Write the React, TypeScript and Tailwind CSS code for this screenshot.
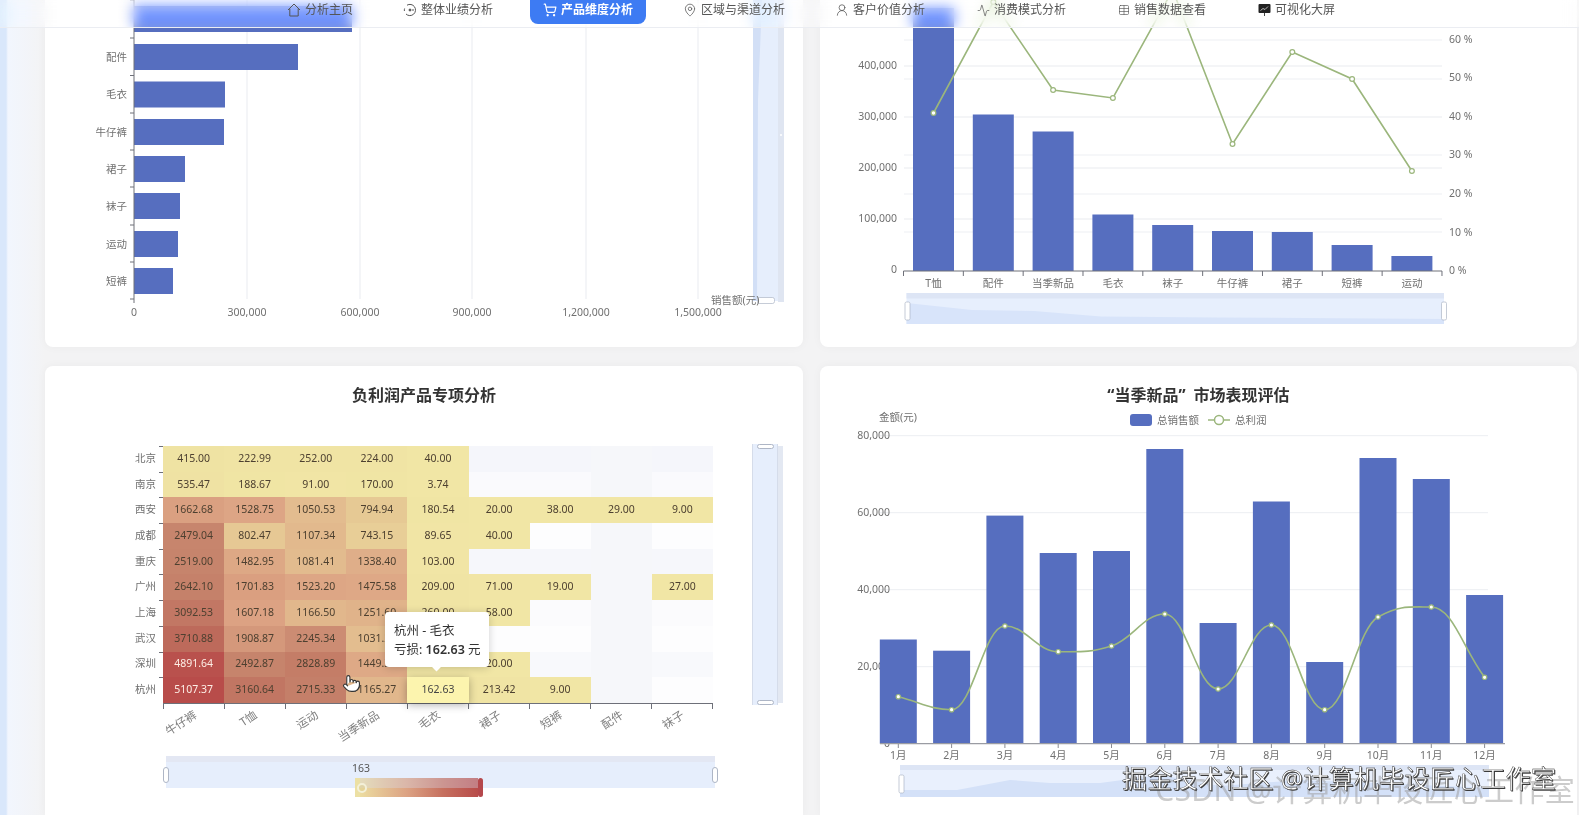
import { Activity, MapPin, Pointer, ShoppingCart, Table, UserRound } from "lucide-react";
import type { ReactNode } from "react";

const BAR = "#566ebf";
const LINE = "#9bb67c";

function HomeIcon() {
  return (
    <svg width="14" height="14" viewBox="0 0 14 14" fill="none" stroke="currentColor" strokeWidth="1">
      <path d="M1 7 7 1l6 6M2.8 5.6V13h8.4V5.6" />
    </svg>
  );
}

function OverviewIcon() {
  return (
    <svg width="14" height="14" viewBox="0 0 14 14" fill="none" stroke="currentColor" strokeWidth="1">
      <path d="M4 2.2A5.6 5.6 0 1 1 3 11M1.6 5.5a5.6 5.6 0 0 0-.2 2.5" />
      <circle cx="7" cy="7" r="1" fill="currentColor" />
      <path d="M9 7h2" />
    </svg>
  );
}

function ScreenIcon() {
  return (
    <svg width="13" height="14" viewBox="0 0 13 14">
      <rect x="0.5" y="1" width="12" height="9" rx="1" fill="#222" />
      <path d="m2.5 7.5 2.5-2 2 1 3-3" stroke="#ddd" strokeWidth="0.8" fill="none" />
      <path d="M6.5 10v3" stroke="#444" strokeWidth="1" />
    </svg>
  );
}

const navItems: { label: string; icon: ReactNode; active?: boolean; nudge?: boolean }[] = [
  { label: "分析主页", icon: <HomeIcon /> },
  { label: "整体业绩分析", icon: <OverviewIcon /> },
  { label: "产品维度分析", icon: <ShoppingCart size={14} />, active: true },
  { label: "区域与渠道分析", icon: <MapPin size={14} strokeWidth={1.3} /> },
  { label: "客户价值分析", icon: <UserRound size={14} strokeWidth={1.3} /> },
  { label: "消费模式分析", icon: <Activity size={13} strokeWidth={1.3} />, nudge: true },
  { label: "销售数据查看", icon: <Table size={12} strokeWidth={1.3} />, nudge: true },
  { label: "可视化大屏", icon: <ScreenIcon />, nudge: true },
];

function TopNav() {
  return (
    <nav className="absolute inset-x-0 top-0 z-20 flex h-[28px] items-start gap-[24px] border-b border-[#ebedf2] bg-white/25 pl-[274px] backdrop-blur-[7px] backdrop-saturate-[2]">
      {navItems.map((item) => (
        <div
          key={item.label}
          className={
            item.active
              ? "flex h-[24px] items-center gap-[4px] rounded-b-lg bg-[#3d7bf3] px-[13px] pb-[4px] text-[12px] font-bold text-white"
              : item.nudge
                ? "ml-[2px] flex h-[24px] items-center gap-[4px] px-[13px] pb-[4px] text-[12px] text-[#555]"
                : "flex h-[24px] items-center gap-[4px] px-[13px] pb-[4px] text-[12px] text-[#555]"
          }
        >
          {item.icon}
          <span>{item.label}</span>
        </div>
      ))}
    </nav>
  );
}

const hBars = [
  { name: "", y: 6, x: 352 },
  { name: "配件", y: 44, x: 298 },
  { name: "毛衣", y: 81.5, x: 225 },
  { name: "牛仔裤", y: 119, x: 224 },
  { name: "裙子", y: 156, x: 185 },
  { name: "袜子", y: 193, x: 180 },
  { name: "运动", y: 231, x: 178 },
  { name: "短裤", y: 268, x: 173 },
];

function TopSellersChart() {
  const grid = [247, 360, 472, 586, 698];
  const ticks = [134, ...grid];
  const labels = ["0", "300,000", "600,000", "900,000", "1,200,000", "1,500,000"];
  return (
    <svg width="758" height="347" viewBox="45 0 758 347" className="block text-[10.5px]">
      {grid.map((x) => (
        <line key={x} x1={x} x2={x} y1="0" y2="299" stroke="#e9ebf0" />
      ))}
      <rect x="753" y="0" width="31" height="301" fill="#e6eefc" />
      <path d="M753 0H762L758 100 757 301H753Z" fill="#d2dff6" />
      <rect x="778" y="0" width="6" height="302" fill="#dfe5f1" />
      <circle cx="781" cy="135" r="1" fill="#fff" />
      <rect x="757.5" y="297.5" width="17" height="6" rx="2" fill="#fff" stroke="#aeb6c6" strokeWidth="0.7" />
      {hBars.map((b) => (
        <g key={b.y}>
          <rect x="134" y={b.y} width={b.x - 134} height="26" fill={BAR} />
          <text x="127" y={b.y + 13} dy="0.35em" textAnchor="end" fill="#707070">
            {b.name}
          </text>
          <line x1="130" x2="134" y1={b.y - 6} y2={b.y - 6} stroke="#6e7079" />
        </g>
      ))}
      <line x1="130" x2="134" y1="299" y2="299" stroke="#6e7079" />
      <line x1="134" x2="134" y1="0" y2="303" stroke="#6e7079" />
      {ticks.map((x, i) => (
        <text key={x} x={x} y="312" dy="0.35em" textAnchor="middle" fill="#707070">
          {labels[i]}
        </text>
      ))}
      <text x="711" y="300" dy="0.35em" fill="#707070">
        销售额(元)
      </text>
    </svg>
  );
}

const comboBars = [
  { name: "T恤", top: 8, rate: 113 },
  { name: "配件", top: 114.5, rate: 2 },
  { name: "当季新品", top: 131.5, rate: 90 },
  { name: "毛衣", top: 214.5, rate: 98 },
  { name: "袜子", top: 225, rate: -10 },
  { name: "牛仔裤", top: 231, rate: 144 },
  { name: "裙子", top: 232, rate: 52 },
  { name: "短裤", top: 245, rate: 79 },
  { name: "运动", top: 256, rate: 171 },
];

function ProductComboChart() {
  const cx = (i: number) => 933.5 + i * 59.8;
  const points = comboBars.map((b, i) => `${cx(i)},${b.rate}`).join(" ");
  return (
    <svg width="757" height="347" viewBox="820 0 757 347" className="block text-[10.5px]">
      {[66, 117, 168, 219].map((y) => (
        <line key={y} x1="904" x2="1442" y1={y} y2={y} stroke="#eaecf0" strokeWidth="1.2" />
      ))}
      {[40, 79, 155, 194, 232].map((y) => (
        <line key={y} x1="904" x2="1442" y1={y} y2={y} stroke="#eef0f3" strokeWidth="1.2" />
      ))}
      {["400,000", "300,000", "200,000", "100,000", "0"].map((t, i) => (
        <text key={t} x="897" y={65 + i * 51.2} dy="0.35em" textAnchor="end" fill="#707070">
          {t}
        </text>
      ))}
      {["60 %", "50 %", "40 %", "30 %", "20 %", "10 %", "0 %"].map((t, i) => (
        <text key={t} x="1449" y={39 + i * 38.6} dy="0.35em" fill="#707070">
          {t}
        </text>
      ))}
      {comboBars.map((b, i) => (
        <g key={b.name}>
          <rect x={cx(i) - 20.5} y={b.top} width="41" height={271 - b.top} fill={BAR} />
          <text x={cx(i)} y="283" dy="0.35em" textAnchor="middle" fill="#707070">
            {b.name}
          </text>
        </g>
      ))}
      <line x1="903.5" x2="1442" y1="271" y2="271" stroke="#6e7079" />
      {Array.from({ length: 10 }, (_, i) => (
        <line key={i} x1={903.5 + i * 59.83} x2={903.5 + i * 59.83} y1="271" y2="276" stroke="#6e7079" />
      ))}
      <polyline points={points} fill="none" stroke={LINE} strokeWidth="1.6" />
      {comboBars.map((b, i) => (
        <circle key={b.name} cx={cx(i)} cy={b.rate} r="2.4" fill="#fff" stroke={LINE} strokeWidth="1.2" />
      ))}
      <rect x="906.5" y="293" width="537.5" height="31" fill="#e7effd" />
      <rect x="906.5" y="293" width="537.5" height="5.5" fill="#dde5f5" />
      <path d="M906.5 303 972 310 1034 311 1101 316.5 1216 317.5 1444 319V324H906.5Z" fill="#d8e4fa" />
      <rect x="905" y="302" width="5" height="18" rx="1.5" fill="#fff" stroke="#aeb6c6" strokeWidth="0.7" />
      <rect x="1441.5" y="302" width="5" height="18" rx="1.5" fill="#fff" stroke="#aeb6c6" strokeWidth="0.7" />
    </svg>
  );
}

const products = ["牛仔裤", "T恤", "运动", "当季新品", "毛衣", "裙子", "短裤", "配件", "袜子"];

const heatRows: { city: string; tint: string; values: (number | null)[] }[] = [
  { city: "北京", tint: "#f5f6fb", values: [415, 222.99, 252, 224, 40, null, null, null, null] },
  { city: "南京", tint: "#fafafd", values: [535.47, 188.67, 91, 170, 3.74, null, null, null, null] },
  { city: "西安", tint: "#fdfdfe", values: [1662.68, 1528.75, 1050.53, 794.94, 180.54, 20, 38, 29, 9] },
  { city: "成都", tint: "#fdfdfe", values: [2479.04, 802.47, 1107.34, 743.15, 89.65, 40, null, null, null] },
  { city: "重庆", tint: "#f6f7fb", values: [2519, 1482.95, 1081.41, 1338.4, 103, null, null, null, null] },
  { city: "广州", tint: "#fafafd", values: [2642.1, 1701.83, 1523.2, 1475.58, 209, 71, 19, null, 27] },
  { city: "上海", tint: "#fbfbfd", values: [3092.53, 1607.18, 1166.5, 1251.6, 260, 58, null, null, null] },
  { city: "武汉", tint: "#fdfdfe", values: [3710.88, 1908.87, 2245.34, 1031.2, 150, null, null, null, null] },
  { city: "深圳", tint: "#f8f9fc", values: [4891.64, 2492.87, 2828.89, 1449.3, 180, 20, null, null, null] },
  { city: "杭州", tint: "#fdfdfe", values: [5107.37, 3160.64, 2715.33, 1165.27, 162.63, 213.42, 9, null, null] },
];

const stops: [number, number[]][] = [
  [0, [241, 230, 165]],
  [550, [239, 226, 163]],
  [800, [230, 200, 148]],
  [1600, [220, 162, 131]],
  [2500, [198, 132, 108]],
  [3700, [189, 106, 91]],
  [5107, [184, 76, 74]],
];

function heatColor(v: number) {
  for (let i = 1; i < stops.length; i++) {
    if (v <= stops[i][0]) {
      const [a, ca] = stops[i - 1];
      const [b, cb] = stops[i];
      const t = (v - a) / (b - a);
      const c = ca.map((n, k) => Math.round(n + (cb[k] - n) * t));
      return `rgb(${c[0]},${c[1]},${c[2]})`;
    }
  }
  return "rgb(184,76,74)";
}

function HeatmapCard() {
  return (
    <section className="overflow-hidden rounded-t-lg bg-white pt-[19px] shadow-[0_0_10px_rgba(0,0,0,0.04)]">
      <h2 className="text-center text-[16px] leading-[20px] font-bold text-[#333]">负利润产品专项分析</h2>
      <div className="relative mt-[41px] flex h-[310px] items-start">
        <div className="w-[118px]">
          {heatRows.map((row) => (
            <div key={row.city} className="flex h-[25.7px] justify-end text-[10.5px] text-[#707070]">
              <span className="mr-[3px] self-center">{row.city}</span>
              <span className="w-[4px] border-t border-[#6e7079]" />
            </div>
          ))}
        </div>
        <div className="w-[550px]">
          <div className="grid grid-cols-9 grid-rows-[repeat(10,25.7px)] text-[10.5px]">
            {heatRows.map((row) =>
              row.values.map((v, i) => {
                const key = `${row.city}-${i}`;
                if (v === null) {
                  return <div key={key} style={{ backgroundColor: i === 7 ? "#f6f7fa" : row.tint }} />;
                }
                if (row.city === "杭州" && i === 4) {
                  return (
                    <div
                      key={key}
                      className="relative z-10 flex items-center justify-center bg-[#fcf4ae] text-[#444] shadow-[0_2px_8px_rgba(0,0,0,0.3)]"
                    >
                      {v.toFixed(2)}
                    </div>
                  );
                }
                return (
                  <div
                    key={key}
                    className={
                      v > 4000
                        ? "flex items-center justify-center text-[#fdeee6]"
                        : "flex items-center justify-center text-[#4d4030]"
                    }
                    style={{ backgroundColor: heatColor(v) }}
                  >
                    {v.toFixed(2)}
                  </div>
                );
              }),
            )}
          </div>
          <div className="grid grid-cols-9 border-t border-r border-[#6e7079] text-[11.5px] text-[#808080]">
            {products.map((p) => (
              <div key={p} className="h-[5px] border-l border-[#6e7079]">
                <div className="flex w-1/2 justify-end pt-[2px] pr-[4px] whitespace-nowrap">
                  <span className="origin-top-right rotate-[-33deg]">{p}</span>
                </div>
              </div>
            ))}
          </div>
        </div>
        <div className="ml-[39px] flex h-[257px] w-[31px]">
          <div className="-my-[2px] flex w-[26px] flex-col items-center justify-between border-x border-[#d5dcea] bg-[#e6eefc]">
            <span className="h-[5px] w-[17px] rounded-sm border border-[#aeb6c6] bg-white" />
            <span className="h-[5px] w-[17px] rounded-sm border border-[#aeb6c6] bg-white" />
          </div>
          <div className="w-[5px] bg-[#e3e8f2]" />
        </div>
        <div className="absolute top-[166px] left-[340px] z-10 h-[55px] w-[104px] rounded bg-white px-[9px] py-[9px] text-[12.5px] leading-[19px] whitespace-nowrap text-[#333] shadow-[0_1px_8px_rgba(0,0,0,0.18)]">
          <p>杭州 - 毛衣</p>
          <p>
            亏损: <b className="font-semibold">162.63</b> 元
          </p>
          <span className="absolute bottom-[-3px] left-[48px] size-[7px] rotate-45 bg-white" />
        </div>
        <Pointer
          size={19}
          strokeWidth={1.4}
          fill="#fff"
          className="absolute top-[228px] left-[297px] z-10 text-[#333]"
        />
      </div>
      <div className="relative ml-[121px] w-[549px] text-[10.5px] text-[#555]">
        <div className="h-[6px] bg-[#e3e7f3]" />
        <div className="flex h-[26px] items-center justify-between bg-[#e6eefc]">
          <span className="-ml-[3px] h-[16px] w-[6px] rounded-sm border border-[#aeb6c6] bg-white" />
          <span className="-mr-[3px] h-[16px] w-[6px] rounded-sm border border-[#aeb6c6] bg-white" />
        </div>
        <span className="absolute top-[5px] left-[186px]">163</span>
        <div className="absolute top-[22px] left-[189px] flex h-[19px] w-[128px]">
          <span className="w-[5px] bg-[#ece0a4]" />
          <div className="relative flex-1 bg-[linear-gradient(90deg,#ecdca0,#dca283_40%,#c6705f_70%,#b84c4a)]">
            <div className="h-[10px] bg-[#d8def0]/35" />
            <span className="absolute top-[5px] left-[-3px] size-[10px] rounded-full border-2 border-[#f3f0d8] bg-[#d9cb8c]/40" />
          </div>
          <span className="w-[5px] rounded-sm bg-[#b5484c]" />
        </div>
      </div>
    </section>
  );
}

const monthly = [
  { m: "1月", top: 639.5, profit: 696.7 },
  { m: "2月", top: 650.7, profit: 709.7 },
  { m: "3月", top: 515.6, profit: 626 },
  { m: "4月", top: 553, profit: 651.7 },
  { m: "5月", top: 551, profit: 646 },
  { m: "6月", top: 449, profit: 614 },
  { m: "7月", top: 623, profit: 689 },
  { m: "8月", top: 501.5, profit: 625 },
  { m: "9月", top: 662, profit: 709.7 },
  { m: "10月", top: 458, profit: 617 },
  { m: "11月", top: 479, profit: 607 },
  { m: "12月", top: 595, profit: 677.3 },
];

// monotone curve: flat at local peaks, so the line never overshoots a point
function smoothPath(pts: [number, number][]) {
  const slopes = pts.map((p, i) => {
    if (i === 0) return (pts[1][1] - p[1]) / (pts[1][0] - p[0]);
    if (i === pts.length - 1) return (p[1] - pts[i - 1][1]) / (p[0] - pts[i - 1][0]);
    const a = p[1] - pts[i - 1][1];
    const b = pts[i + 1][1] - p[1];
    if (a * b <= 0) return 0;
    const m = (pts[i + 1][1] - pts[i - 1][1]) / (pts[i + 1][0] - pts[i - 1][0]);
    return Math.abs(m) > 3 * Math.min(Math.abs(a), Math.abs(b)) / (p[0] - pts[i - 1][0])
      ? (Math.sign(m) * 3 * Math.min(Math.abs(a), Math.abs(b))) / (p[0] - pts[i - 1][0])
      : m;
  });
  let d = `M${pts[0][0]} ${pts[0][1]}`;
  for (let i = 0; i < pts.length - 1; i++) {
    const [x0, y0] = pts[i];
    const [x1, y1] = pts[i + 1];
    const k = (x1 - x0) * 0.4;
    d += `C${x0 + k} ${y0 + slopes[i] * k} ${x1 - k} ${y1 - slopes[i + 1] * k} ${x1} ${y1}`;
  }
  return d;
}

function SeasonChart() {
  const cx = (i: number) => 898.3 + i * 53.3;
  const pts = monthly.map((d, i) => [cx(i), d.profit] as [number, number]);
  return (
    <svg width="757" height="410" viewBox="820 405 757 410" className="block text-[10.5px]">
      <text x="879" y="417" dy="0.35em" fill="#707070">
        金额(元)
      </text>
      <rect x="1130" y="414" width="22" height="12" rx="3" fill={BAR} />
      <text x="1157" y="420" dy="0.35em" fill="#707070">
        总销售额
      </text>
      <line x1="1208" x2="1230" y1="420" y2="420" stroke={LINE} strokeWidth="1.5" />
      <circle cx="1219" cy="420" r="4.5" fill="#fff" stroke={LINE} strokeWidth="1.5" />
      <text x="1235" y="420" dy="0.35em" fill="#707070">
        总利润
      </text>
      {[
        ["80,000", 435.7],
        ["60,000", 512.7],
        ["40,000", 589.7],
        ["20,000", 666.7],
      ].map(([t, y]) => (
        <g key={t}>
          <line x1="880" x2="1488" y1={y} y2={y} stroke="#eceef2" />
          <text x="890" y={y} dy="0.35em" textAnchor="end" fill="#707070">
            {t}
          </text>
        </g>
      ))}
      <text x="890" y="743.7" dy="0.35em" textAnchor="end" fill="#707070">
        0
      </text>
      {monthly.map((d, i) => (
        <g key={d.m}>
          <rect x={cx(i) - 18.5} y={d.top} width="37" height={743.7 - d.top} fill={BAR} />
          <line x1={cx(i)} x2={cx(i)} y1="743.7" y2="748" stroke="#8a8c93" />
          <text x={cx(i)} y="755" dy="0.35em" textAnchor="middle" fill="#707070">
            {d.m}
          </text>
        </g>
      ))}
      <line x1="880" x2="1505" y1="743.7" y2="743.7" stroke="#9a9ca3" strokeWidth="1.2" />
      <path d={smoothPath(pts)} fill="none" stroke={LINE} strokeWidth="1.6" />
      {pts.map(([x, y]) => (
        <circle key={x} cx={x} cy={y} r="2.2" fill="#fff" stroke={LINE} strokeWidth="1.2" />
      ))}
      <rect x="900" y="765" width="589" height="32" fill="#e9f0fd" />
      <rect x="900" y="765" width="589" height="5" fill="#dde5f5" />
      <path d="M900 790H957L1010 780 1050 783H1100L1160 775 1220 786 1300 780 1400 784 1489 788V797H900Z" fill="#d4e1f8" />
      <rect x="899" y="775" width="5" height="18" rx="1.5" fill="#fff" stroke="#aeb6c6" strokeWidth="0.7" />
    </svg>
  );
}

function Watermarks() {
  return (
    <>
      <span className="absolute top-[777px] right-[4px] z-30 text-[30px] leading-[25px] tracking-[0.3px] whitespace-nowrap text-[#9a9a9a]/50">
        CSDN @计算机毕设匠心工作室
      </span>
      <span className="absolute top-[765px] left-[1122px] z-30 text-[25px] leading-[26px] tracking-[0.3px] whitespace-nowrap text-white [-webkit-text-stroke:0.4px_#222] [text-shadow:1px_1px_0_#444]">
        掘金技术社区 @计算机毕设匠心工作室
      </span>
    </>
  );
}

export default function App() {
  return (
    <div className="relative h-[815px] w-full overflow-hidden bg-[linear-gradient(90deg,#d9e7fb_0,#d9e7fb_6px,#f2f6fe_8px,#f3f3f4_45px)] font-['Noto_Sans','Noto_Sans_CJK_SC',sans-serif] blur-[0.5px]">
      <TopNav />
      <main className="grid h-full grid-cols-[758px_757px] grid-rows-[347px_1fr] gap-x-[17px] gap-y-[19px] pl-[45px]">
        <section className="overflow-hidden rounded-b-lg bg-white shadow-[0_0_10px_rgba(0,0,0,0.04)]">
          <TopSellersChart />
        </section>
        <section className="overflow-hidden rounded-b-lg bg-white shadow-[0_0_10px_rgba(0,0,0,0.04)]">
          <ProductComboChart />
        </section>
        <HeatmapCard />
        <section className="overflow-hidden rounded-t-lg bg-white pt-[19px] shadow-[0_0_10px_rgba(0,0,0,0.04)]">
          <h2 className="text-center text-[16px] leading-[20px] font-bold text-[#333]">
            “当季新品<span className="mr-2">”</span>市场表现评估
          </h2>
          <SeasonChart />
        </section>
      </main>
      <Watermarks />
    </div>
  );
}
